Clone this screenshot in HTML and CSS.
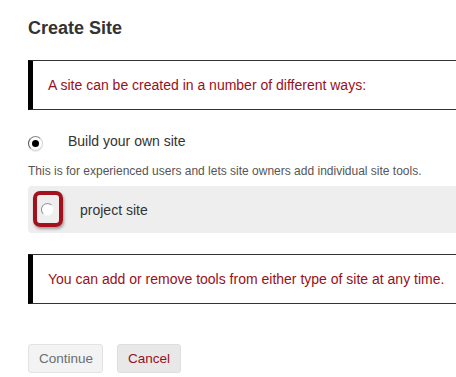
FILE: index.html
```html
<!DOCTYPE html>
<html lang="en">
<head>
      <meta charset="UTF-8">
      <meta name="viewport" content="width=device-width, initial-scale=1.0">
      <title>Create Site</title>
      <link rel="stylesheet" href="styles.css">
</head>
<body>
      <div class="page">
            <h1 class="page-title">Create Site</h1>

            <div class="notice">A site can be created in a number of different ways:</div>

            <label class="choice">
                  <span class="radio checked"></span>
                  <span class="choice-label">Build your own site</span>
            </label>
            <p class="choice-help">This is for experienced users and lets site owners add individual site tools.</p>

            <label class="choice choice-row">
                  <span class="radio"></span>
                  <span class="choice-label">project site</span>
                  <span class="highlight"></span>
            </label>

            <div class="notice notice-second">You can add or remove tools from either type of site at any time.</div>

            <div class="actions">
                  <button class="btn btn-disabled" type="button">Continue</button>
                  <button class="btn btn-cancel" type="button">Cancel</button>
            </div>
      </div>
</body>
</html>
```

FILE: styles.css
```css
:root {
	--text: #333;
	--muted: #555;
	--accent: #990f20;
	--row: #eee;
}
html {
	box-sizing: border-box;
}
*, *:before, *:after {
	box-sizing: inherit;
}
body {
	margin: 0;
	overflow: hidden;
	background: #fff;
	color: var(--text);
	font-family: "Liberation Sans", Arial, sans-serif;
}
.page {
	padding: 18px 0 0 28px;
}
.page-title {
	margin: 0;
	font-size: 18px;
	line-height: 20px;
	font-weight: bold;
	color: #333;
}
.notice {
	margin-top: 22px;
	height: 50px;
	padding: 0 0 0 15px;
	border-top: 1px solid #333;
	border-bottom: 1px solid #333;
	border-left: 5px solid #000;
	color: var(--accent);
	font-size: 14px;
	line-height: 48px;
	white-space: nowrap;
}
.notice-second {
	margin-top: 21px;
	line-height: 49px;
}
.choice {
	display: flex;
	align-items: flex-start;
	margin-top: 21px;
	height: 20px;
	font-size: 14px;
	line-height: 20px;
}
.choice-label {
	margin-left: 25px;
}
.radio {
	flex: none;
	width: 15px;
	height: 15px;
	margin-top: 5px;
	border-radius: 50%;
	background: #fff;
	border: 1px solid #d6d6d6;
	border-left-color: #555;
	border-top-color: #888;
	box-shadow: 0 1px 1px rgba(0, 0, 0, 0.08);
	position: relative;
}
.radio.checked:after {
	content: "";
	position: absolute;
	left: 3px;
	top: 3px;
	width: 7px;
	height: 7px;
	border-radius: 50%;
	background: #000;
}
.choice-help {
	margin: 12px 0 0;
	font-size: 12px;
	line-height: 16px;
	color: var(--muted);
	white-space: nowrap;
}
.choice-row {
	position: relative;
	margin-top: 7px;
	height: 47px;
	align-items: center;
	padding-left: 13px;
	background: var(--row);
	border-radius: 4px 0 0 4px;
}
.choice-row .radio {
	width: 13px;
	height: 13px;
	margin-top: 0;
	border-color: #f4f4f4;
	border-left-color: #888;
	border-top-color: #999;
	box-shadow: none;
}
.choice-row .choice-label {
	margin-left: 26px;
}
.highlight {
	position: absolute;
	left: 5px;
	top: 5px;
	width: 30px;
	height: 36px;
	border: 4px solid #a3121c;
	border-radius: 7px;
	box-shadow: 1px 2px 3px rgba(0, 0, 0, 0.35);
}
.actions {
	display: flex;
	gap: 14px;
	margin-top: 40px;
}
.btn {
	height: 29px;
	padding: 0 10px;
	border: 1px solid #e3e3e3;
	border-radius: 3px;
	font-family: inherit;
	font-size: 13.5px;
	line-height: 27px;
}
.btn-disabled {
	width: 75px;
	background: #f3f3f3;
	color: #6a6e74;
}
.btn-cancel {
	width: 64px;
	background: #e8e8e8;
	border-color: #dedede;
	color: var(--accent);
}
```
